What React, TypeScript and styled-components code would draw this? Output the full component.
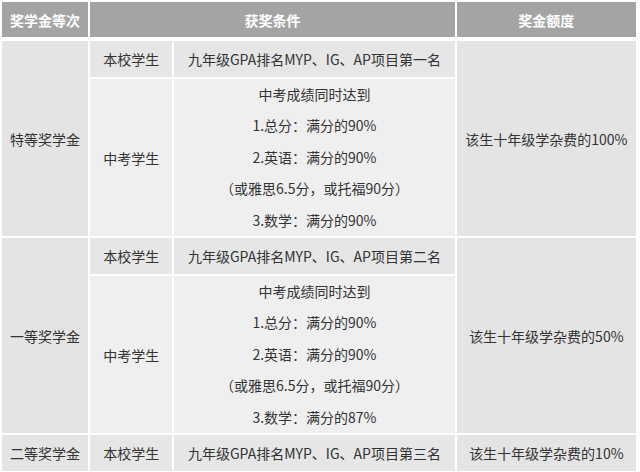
import React from 'react';
import styled, { createGlobalStyle } from 'styled-components';

const GlobalStyle = createGlobalStyle`
  html, body {
    margin: 0;
    padding: 0;
    background: #ffffff;
  }
  body {
    font-family: "Microsoft YaHei", "Noto Sans CJK SC", "Noto Sans", sans-serif;
  }
`;

const Table = styled.table`
  border-collapse: separate;
  border-spacing: 2px;
  table-layout: fixed;
  width: 638px;
  font-size: 14px;
  color: #333333;
`;

const Col = styled.col<{ w: number }>`
  width: ${(p) => p.w}px;
`;

const Head = styled.th`
  height: 35px;
  padding: 0;
  background: #a4a4a4;
  color: #ffffff;
  font-weight: bold;
  font-size: 14px;
  text-align: center;
  border-bottom: 2px solid #ffffff;
`;

const Cell = styled.td<{ tone: 'dark' | 'mid' | 'light'; h?: number }>`
  padding: 0;
  text-align: center;
  vertical-align: middle;
  height: ${(p) => (p.h ? `${p.h}px` : 'auto')};
  background: ${(p) =>
    p.tone === 'dark' ? '#e4e4e4' : p.tone === 'mid' ? '#e6e6e6' : '#efefef'};
  white-space: nowrap;
`;

const Line = styled.div`
  line-height: 31.4px;
`;

type Tier = {
  name: string;
  rank: string;
  lines?: string[];
  award: string;
};

const tiers: Tier[] = [
  {
    name: '特等奖学金',
    rank: '九年级GPA排名MYP、IG、AP项目第一名',
    lines: ['中考成绩同时达到', '1.总分：满分的90%', '2.英语：满分的90%', '（或雅思6.5分，或托福90分）', '3.数学：满分的90%'],
    award: '该生十年级学杂费的100%',
  },
  {
    name: '一等奖学金',
    rank: '九年级GPA排名MYP、IG、AP项目第二名',
    lines: ['中考成绩同时达到', '1.总分：满分的90%', '2.英语：满分的90%', '（或雅思6.5分，或托福90分）', '3.数学：满分的87%'],
    award: '该生十年级学杂费的50%',
  },
  {
    name: '二等奖学金',
    rank: '九年级GPA排名MYP、IG、AP项目第三名',
    award: '该生十年级学杂费的10%',
  },
];

export default function App() {
  return (
    <>
      <GlobalStyle />
      <Table>
        <colgroup>
          <Col w={86} />
          <Col w={82} />
          <Col w={280} />
          <Col w={179} />
        </colgroup>
        <thead>
          <tr>
            <Head>奖学金等次</Head>
            <Head colSpan={2}>获奖条件</Head>
            <Head>奖金额度</Head>
          </tr>
        </thead>
        <tbody>
          {tiers.map((t) =>
            t.lines ? (
              <React.Fragment key={t.name}>
                <tr>
                  <Cell tone="dark" rowSpan={2}>{t.name}</Cell>
                  <Cell tone="mid" h={36}>本校学生</Cell>
                  <Cell tone="mid">{t.rank}</Cell>
                  <Cell tone="dark" rowSpan={2}>{t.award}</Cell>
                </tr>
                <tr>
                  <Cell tone="light">中考学生</Cell>
                  <Cell tone="light">
                    {t.lines.map((l) => (
                      <Line key={l}>{l}</Line>
                    ))}
                  </Cell>
                </tr>
              </React.Fragment>
            ) : (
              <tr key={t.name}>
                <Cell tone="dark" h={36}>{t.name}</Cell>
                <Cell tone="mid">本校学生</Cell>
                <Cell tone="mid">{t.rank}</Cell>
                <Cell tone="dark">{t.award}</Cell>
              </tr>
            )
          )}
        </tbody>
      </Table>
    </>
  );
}
